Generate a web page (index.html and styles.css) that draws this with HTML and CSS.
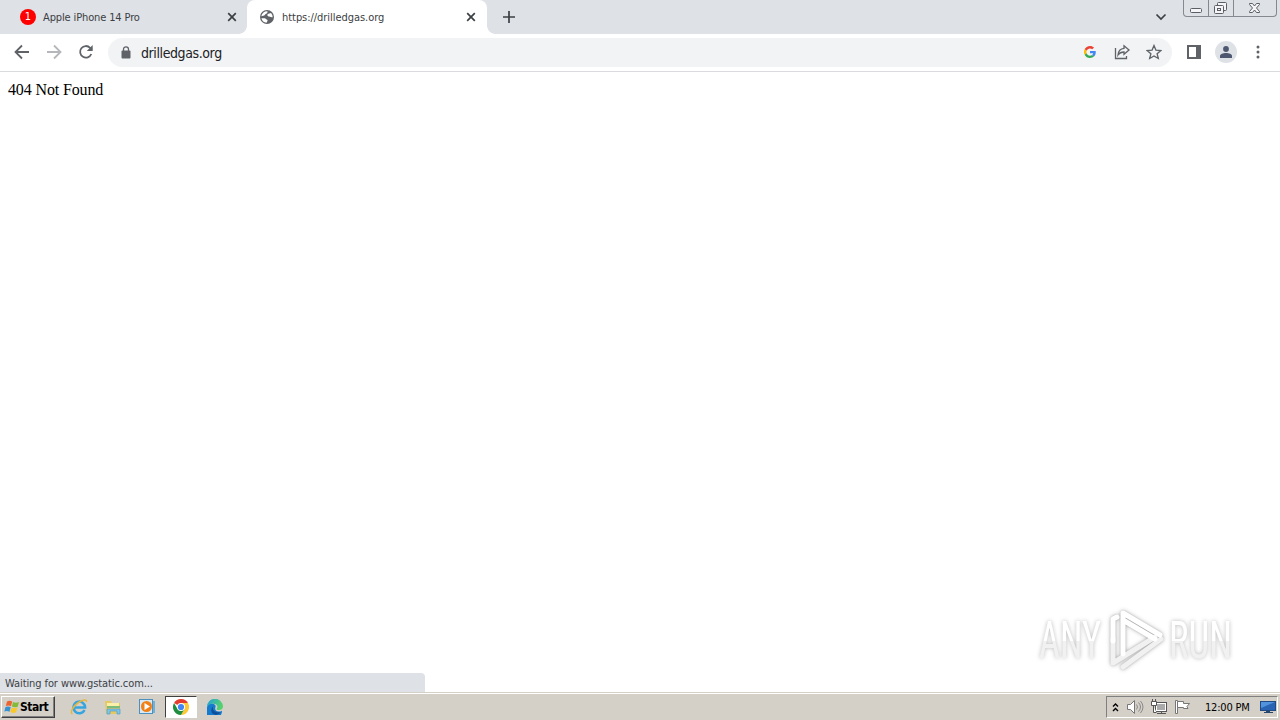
FILE: index.html
```
<!doctype html>
<html lang="en">
  <head>
    <meta charset="UTF-8" />
    <meta name="viewport" content="width=device-width, initial-scale=1.0" />
    <title>https://drilledgas.org</title>
    <link rel="stylesheet" href="styles.css">
  </head>

  <body>
    <div class="tabs">
      <div class="tab">
        <span class="badge">1</span>
        <span class="tab-title">Apple iPhone 14 Pro</span>
        <svg class="close" width="10" height="10" viewBox="0 0 10 10"><path d="M1.2 1.2l7.6 7.6M8.8 1.2L1.2 8.8" /></svg>
      </div>
      <div class="tab active">
        <svg class="globe" width="16" height="16" viewBox="0 0 16 16">
          <circle cx="8" cy="8" r="7" fill="#5f6368" />
          <path d="M8.5 2.300c-.2 1.500.2 1.900-1 2.300-1.400.5-1.400 1.500-2.300 1.900L2.300 7.200A5.800 5.800 0 0 1 8.500 2.300z" fill="#fff" />
          <path d="M9.500 4.800c-1 .3-1.400 1.200-.9 2 .7.900 1.600.7 2.300 1 .6.400 1.700.5 2.800.4a5.800 5.800 0 0 0-1.700-4.200zM2.400 9.200h3.400c1.200.1 1 1.200 1.900 1.400 1 .3 1.100 1 .6 1.600-.4.500-.3 1-.8 1.500a5.800 5.800 0 0 1-5.100-4.500z" fill="#fff" />
        </svg>
        <span class="tab-title url-title">https://drilledgas.org</span>
        <svg class="close" width="10" height="10" viewBox="0 0 10 10"><path d="M1.2 1.2l7.6 7.6M8.8 1.2L1.2 8.8" /></svg>
      </div>
      <svg class="new-tab" width="12" height="12" viewBox="0 0 12 12"><path d="M6 0v12M0 6h12" /></svg>
      <svg class="tab-search" width="12" height="8" viewBox="0 0 12 8"><path d="M1.500 1.500L6 6l4.500-4.500" /></svg>
      <div class="window-buttons">
        <svg width="24" height="16" viewBox="0 0 24 16"><rect x="6.500" y="8.500" width="11" height="4" rx="1" /></svg>
        <svg width="24" height="16" viewBox="0 0 24 16">
          <rect x="8.500" y="2.500" width="9" height="8" rx="1" />
          <rect x="5.500" y="5.500" width="9" height="8" rx="1" />
          <rect x="8.500" y="8.500" width="3" height="2" />
        </svg>
        <svg width="42" height="16" viewBox="0 0 42 16"><path d="M15.500 3.500h3l2 2.500 2-2.500h3v1l-3 3.500 3 3.500v1h-3l-2-2.500-2 2.500h-3v-1l3-3.500-3-3.500z" /></svg>
      </div>
    </div>

    <div class="toolbar">
      <svg class="nav" width="16" height="16" viewBox="0 0 16 16"><path d="M15 8H2M8 1.500L1.500 8 8 14.500" /></svg>
      <svg class="nav disabled" width="16" height="16" viewBox="0 0 16 16"><path d="M1 8h13M8 1.500L14.500 8 8 14.500" /></svg>
      <svg class="nav" width="16" height="16" viewBox="0 0 16 16">
        <path d="M13.300 10a5.800 5.800 0 1 1-1.200-6.200L14 5.700" />
        <path d="M14.700 1v6H8.800z" fill="#5f6368" stroke="none" />
      </svg>
      <div class="address">
        <svg class="lock" width="10" height="13" viewBox="0 0 10 13">
          <rect x="0.500" y="4.500" width="9" height="8" rx="1" fill="#5f6368" />
          <path d="M2.500 5V3.300a2.500 2.500 0 0 1 5 0V5" fill="none" stroke="#5f6368" stroke-width="1.300" />
        </svg>
        <span class="url">drilledgas.org</span>
        <svg class="google" width="12" height="12" viewBox="0 0 48 48">
          <path fill="#ea4335" d="M24 9.500c3.500 0 6.700 1.200 9.200 3.600l6.900-6.900C35.900 2.400 30.500 0 24 0 14.600 0 6.500 5.400 2.600 13.200l8 6.200C12.400 13.700 17.700 9.500 24 9.500z" />
          <path fill="#4285f4" d="M47 24.600c0-1.600-.2-3.100-.4-4.600H24v9h12.900c-.6 3-2.300 5.500-4.800 7.200l7.700 6C44.400 38 47 31.800 47 24.600z" />
          <path fill="#fbbc05" d="M10.500 28.600a14.500 14.500 0 0 1 0-9.200l-8-6.200a24 24 0 0 0 0 21.600z" />
          <path fill="#34a853" d="M24 48c6.500 0 11.900-2.100 15.900-5.800l-7.700-6c-2.200 1.500-4.900 2.300-8.200 2.300-6.300 0-11.600-4.200-13.500-9.900l-8 6.200C6.500 42.600 14.600 48 24 48z" />
        </svg>
        <svg class="line-icon share" width="16" height="16" viewBox="0 0 16 16">
          <path d="M1.500 4v10.500h11V12" />
          <path d="M10 1.800L15 6l-5 4.300V8C7.500 8 5.500 8.800 4 11c.3-3.500 2.500-6.400 6-6.700z" />
        </svg>
        <svg class="line-icon" width="16" height="16" viewBox="0 0 16 16"><path d="M8 1.500l1.900 4.600 5 .4-3.800 3.200 1.200 4.800L8 11.900l-4.300 2.600 1.200-4.800L1.100 6.500l5-.4z" /></svg>
      </div>
      <svg class="panel" width="14" height="14" viewBox="0 0 14 14"><path d="M0 0h14v14H0zM2 2v10h7V2z" fill="#5f6368" fill-rule="evenodd" /></svg>
      <span class="avatar">
        <svg width="12" height="12" viewBox="0 0 12 12"><circle cx="6" cy="3" r="2.900" /><path d="M0 12v-2c0-2 3-3 6-3s6 1 6 3v2z" /></svg>
      </span>
      <svg class="dots" width="4" height="14" viewBox="0 0 4 14"><circle cx="2" cy="2" r="1.500" /><circle cx="2" cy="7" r="1.500" /><circle cx="2" cy="12" r="1.500" /></svg>
    </div>

    <div class="page">
      <span class="message">404 Not Found</span>
      <svg class="watermark" width="236" height="80" viewBox="1028 602 236 80">
        <defs>
          <linearGradient id="shade" gradientUnits="userSpaceOnUse" x1="0" y1="602" x2="0" y2="682">
            <stop offset="0.500" stop-color="#fff" />
            <stop offset="0.500" stop-color="#f1f1f1" />
          </linearGradient>
        </defs>
        <g class="letters" fill="url(#shade)">
          <text x="1039" y="659" textLength="62" lengthAdjust="spacingAndGlyphs">ANY</text>
          <text x="1169" y="659" textLength="63" lengthAdjust="spacingAndGlyphs">RUN</text>
        </g>
        <g class="play">
          <path class="low" d="M1113 640v24l42-26" />
          <path class="low" d="M1123 668l38-28" />
          <path d="M1117 618l-4 2v22" />
          <path d="M1123 655v-41l37 22M1123 621l32 19" />
        </g>
      </svg>
      <div class="status">Waiting for www.gstatic.com...</div>
    </div>

    <div class="taskbar">
      <div class="start">
        <svg width="16" height="16" viewBox="0 0 16 16">
          <path d="M3 2.500c2-1 3.600-.8 5.200.1L7 7.300C5.300 6.300 3.700 6.300 1.800 7z" fill="#ec6430" />
          <path d="M9 3c2 1 3.800 1 6 0l-1.300 4.700c-2 .9-3.800.9-5.800-.1z" fill="#83bb38" />
          <path d="M1.500 8c2-.9 3.600-.7 5.200.2l-1.200 4.600c-1.700-1-3.300-1-5.200-.3z" fill="#3692d3" />
          <path d="M7.600 8.500c2 1 3.800 1 5.800 0l-1.300 4.700c-2 1-3.800.9-5.800-.1z" fill="#f9c92c" />
        </svg>
        <span>Start</span>
      </div>
      <div class="task">
        <svg width="18" height="18" viewBox="0 0 18 18">
          <path d="M14.500 12a5.800 5.800 0 1 1 .6-2.500H4.500" fill="none" stroke="#36a5df" stroke-width="2.500" />
          <path d="M2.500 16C-.5 15 3 8 8.500 4.500 13 1.500 17 1 16.500 4" fill="none" stroke="#e5b640" stroke-width="1.500" />
        </svg>
      </div>
      <div class="task">
        <svg width="18" height="18" viewBox="0 0 18 18">
          <path d="M1 3h6l1 2h8v11H2z" fill="#e6c963" />
          <path d="M3 5h12v4H3z" fill="#faf0a9" />
          <path d="M3 8h13v2H3z" fill="#7dbb78" />
          <path d="M3 16v-5h13v5h-3v-3H6v3z" fill="#7fc5e8" stroke="#4e9dca" stroke-width=".7" />
        </svg>
      </div>
      <div class="task">
        <svg width="18" height="18" viewBox="0 0 18 18">
          <rect x="1.500" y="1.500" width="13" height="14" fill="#d6e9f5" stroke="#4c91be" />
          <path d="M15 3h2v12h-2z" fill="#72b0d5" />
          <circle cx="8.500" cy="8.500" r="5.500" fill="#f18117" />
          <path d="M6.500 5l5.500 3.500L6.500 12z" fill="#fff" />
        </svg>
      </div>
      <div class="task pressed">
        <svg width="16" height="16" viewBox="0 0 16 16">
          <path d="M8 8L1.070 4A8 8 0 0 1 14.930 4z" fill="#e33b2e" />
          <path d="M8 8V4h6.930A8 8 0 0 1 8 16l3.500-6z" fill="#fcc934" />
          <path d="M8 8l3.460 2L8 16A8 8 0 0 1 1.070 4l3.470 6z" fill="#1e8e3e" />
          <circle cx="8" cy="8" r="4" fill="#fff" />
          <circle cx="8" cy="8" r="3.100" fill="#4285f4" />
        </svg>
      </div>
      <div class="task">
        <svg width="16" height="16" viewBox="0 0 16 16">
          <defs>
            <linearGradient id="wave" x1="0" y1="0" x2="1" y2="0.300">
              <stop offset="0" stop-color="#249fdc" />
              <stop offset="1" stop-color="#55d26c" />
            </linearGradient>
          </defs>
          <path d="M0 8c1-3 3.500-4 6-3.300 2 .6 3 2 2.500 3.300-1.500 3.500 2 6 6.500 3.700A8 8 0 1 1 0 8z" fill="#157bcc" />
          <path d="M0 8a8 8 0 0 1 16-.5c0 2-1.500 3.500-4 3.500-2 0-2.800-.7-2-1.700C11.500 6.500 9 4.500 6 4.700 3 4.800.7 6.200 0 8z" fill="url(#wave)" />
          <path d="M6.200 7.500c-1.500 3.500 2.300 7 7.800 5.500a8 8 0 0 1-5 3C3.800 15.500 3 10 6.200 7.500z" fill="#124f9b" />
        </svg>
      </div>

      <div class="tray">
        <svg class="chevrons" width="7" height="9" viewBox="0 0 7 9"><path d="M1 3.500L3.500 1 6 3.500M1 8l2.500-2.500L6 8" /></svg>
        <svg width="18" height="16" viewBox="0 0 18 16">
          <path d="M1.500 5.500h3l4-4v13l-4-4h-3z" fill="#fff" stroke="#777" />
          <path d="M10.500 5.500q2 2.500 0 5M12.500 3.500q4 4.500 0 9M14.500 2q5 6 0 12" fill="none" stroke="#888" />
        </svg>
        <svg width="16" height="16" viewBox="0 0 16 16">
          <rect x="4.500" y="3.500" width="11" height="9" fill="#aaa" stroke="#555" />
          <rect x="5.500" y="4.500" width="9" height="7" fill="none" stroke="#fff" />
          <path d="M6 14.500h9M10.500 13v1" stroke="#555" />
          <path d="M.5 2.500h5v4h-5zM1.500 0v2M4.500 0v2M2.500 7v6.500h3" fill="#fff" stroke="#555" />
        </svg>
        <svg width="17" height="16" viewBox="0 0 17 16">
          <path d="M1.500 1.500h2v13h-2z" fill="#fff" stroke="#777" />
          <path d="M3.500 2.500h6v2h6l-2.500 3 1 2H9.500v-1h-6z" fill="#fff" stroke="#777" />
        </svg>
        <span class="clock">12:00 PM</span>
        <svg class="monitor" width="16" height="14" viewBox="0 0 16 14">
          <rect x="0.500" y="1.500" width="15" height="9" fill="#2863b4" stroke="#224a82" />
          <path d="M1 2h14L1 8z" fill="#5293dd" />
          <path d="M6 11h4v1h3v1H4v-1h2z" fill="#27466d" />
        </svg>
      </div>
    </div>
  </body>
</html>
```
FILE: styles.css
```
body {
  margin: 0;
  height: 720px;
  display: flex;
  flex-direction: column;
  overflow: hidden;
  background-color: white;
  font-family: 'DejaVu Sans Condensed', 'DejaVu Sans', sans-serif;
  font-stretch: condensed;
  font-size: 11px;
}
svg {
  display: block;
  flex-shrink: 0;
}

.tabs {
  height: 34px;
  flex-shrink: 0;
  display: flex;
  align-items: center;
  background-color: #dee1e6;
}
.tab {
  box-sizing: border-box;
  width: 247px;
  height: 34px;
  padding: 0 10px 0 20px;
  display: flex;
  align-items: center;
  color: #3c4043;
}
.tab.active {
  width: 240px;
  padding: 0 11px 0 12px;
  background-color: white;
  border-radius: 8px 8px 0 0;
  position: relative;
}
/* curved feet of the active tab */
.tab.active::before,
.tab.active::after {
  content: '';
  position: absolute;
  bottom: 0;
  width: 8px;
  height: 8px;
}
.tab.active::before {
  left: -8px;
  background: radial-gradient(circle at 0 0, transparent 7.5px, white 8px);
}
.tab.active::after {
  right: -8px;
  background: radial-gradient(circle at 100% 0, transparent 7.5px, white 8px);
}
.badge {
  width: 16px;
  height: 16px;
  border-radius: 50%;
  background-color: #f00;
  color: white;
  line-height: 16px;
  text-align: center;
}
.tab-title {
  flex: 1;
  margin-left: 7px;
  white-space: nowrap;
  letter-spacing: -0.13px;
}
.url-title {
  letter-spacing: -0.05px;
}
.close,
.new-tab,
.tab-search {
  fill: none;
  stroke: #3c4043;
  stroke-width: 1.7;
}
.new-tab {
  margin-left: 16px;
}
.tab-search {
  margin-left: auto;
  margin-right: 16px;
}
.window-buttons {
  display: flex;
  align-self: flex-start;
  margin-right: 3px;
  border: 1px solid #85888e;
  border-top: none;
  border-radius: 0 0 4px 4px;
}
.window-buttons svg {
  fill: #f5f5f7;
  stroke: #5b5e65;
}
.window-buttons svg + svg {
  border-left: 1px solid #85888e;
}

.toolbar {
  box-sizing: border-box;
  height: 38px;
  flex-shrink: 0;
  padding: 0 0 1px 14px;
  display: flex;
  align-items: center;
  border-bottom: 1px solid #d9dbde;
}
.nav {
  margin-right: 16px;
  fill: none;
  stroke: #5f6368;
  stroke-width: 1.8;
}
.nav.disabled {
  stroke: #b5b7ba;
}
.address {
  box-sizing: border-box;
  width: 1064px;
  height: 29px;
  margin-left: -2px;
  padding: 0 10px 0 13px;
  display: flex;
  align-items: center;
  background-color: #f1f3f4;
  border-radius: 15px;
}
.url {
  flex: 1;
  margin-left: 10px;
  padding-top: 1px;
  color: #202124;
  font-size: 14px;
  letter-spacing: -0.4px;
}
.share {
  margin: 0 16px 0 18px;
}
.line-icon {
  fill: none;
  stroke: #5f6368;
  stroke-width: 1.3;
}
.panel {
  margin-left: 15px;
}
.avatar {
  width: 22px;
  height: 22px;
  margin-left: 14px;
  display: flex;
  align-items: center;
  justify-content: center;
  border-radius: 50%;
  background-color: #dee1e6;
  fill: #4d5870;
}
.dots {
  margin-left: 19px;
  fill: #5f6368;
}

.page {
  flex: 1;
  position: relative;
  padding: 9px 8px;
  font-family: 'Liberation Serif', serif;
  font-size: 16px;
  line-height: 18px;
}
.message {
  letter-spacing: -0.13px;
}
.watermark {
  position: absolute;
  right: 16px;
  bottom: 11px;
  filter: drop-shadow(0 0 2px rgba(0, 0, 0, 0.27));
}
.letters {
  font-family: Roboto, sans-serif;
  font-size: 51px;
  font-weight: 400;
}
.play {
  fill: none;
  stroke: white;
  stroke-width: 5;
  stroke-linejoin: round;
  stroke-linecap: round;
  filter: drop-shadow(0 0 1px rgba(0, 0, 0, 0.15));
}
.play .low {
  stroke: #f1f1f1;
}
.status {
  position: absolute;
  left: 0;
  bottom: 0;
  box-sizing: border-box;
  width: 425px;
  height: 19px;
  padding-left: 5px;
  background-color: #dee1e6;
  border-top-right-radius: 4px;
  color: #3c4043;
  font-family: 'DejaVu Sans Condensed', 'DejaVu Sans', sans-serif;
  font-size: 11px;
  line-height: 21px;
  letter-spacing: -0.09px;
}

.taskbar {
  box-sizing: border-box;
  height: 28px;
  flex-shrink: 0;
  padding: 1px 2px 0 1px;
  display: flex;
  align-items: center;
  background-color: #d4d0c8;
  border-top: 1px solid #d4d0c8;
  box-shadow: inset 0 1px white;
}
.start {
  box-sizing: border-box;
  width: 54px;
  height: 22px;
  margin-right: 8px;
  padding-left: 2px;
  display: flex;
  align-items: center;
  border: 1px solid;
  border-color: white #404040 #404040 white;
  box-shadow: inset -1px -1px #808080;
  font-size: 12px;
  font-weight: bold;
  letter-spacing: -0.5px;
}
.task {
  box-sizing: border-box;
  width: 32px;
  height: 22px;
  margin-right: 2px;
  display: flex;
  align-items: center;
  justify-content: center;
}
.task.pressed {
  background-color: white;
  border: 1px solid;
  border-color: #404040 white white #404040;
}
.tray {
  box-sizing: border-box;
  width: 172px;
  height: 22px;
  margin-left: auto;
  padding-left: 5px;
  display: flex;
  align-items: center;
  border: 1px solid;
  border-color: #808080 white white #808080;
}
.tray svg {
  margin-right: 7px;
}
.chevrons {
  fill: none;
  stroke: black;
  stroke-width: 1.4;
}
.clock {
  margin-left: 7px;
  white-space: nowrap;
  letter-spacing: -0.2px;
}
.tray .monitor {
  margin: 0 1px 0 auto;
}
```
